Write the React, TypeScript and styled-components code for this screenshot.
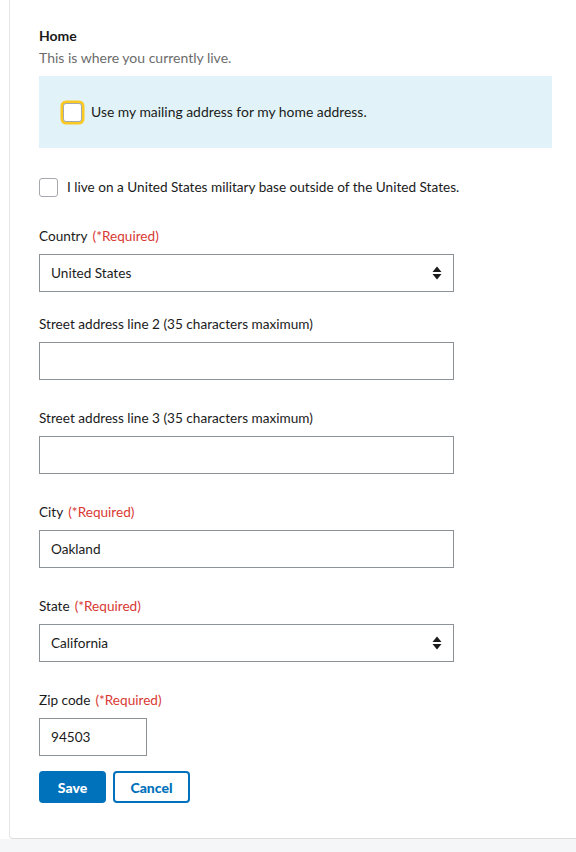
import React from "react";
import styled, { createGlobalStyle } from "styled-components";

const Global = createGlobalStyle`
  html, body { margin: 0; padding: 0; background: #ffffff; }
  body { font-family: "Lato", "Liberation Sans", sans-serif; color: #1b1b1b; }
  * { box-sizing: border-box; }
`;

const Page = styled.div`
  display: flex;
  flex-direction: column;
  width: 576px;
  min-height: 852px;
  background: #ffffff;
`;

const Card = styled.div`
  margin-left: 9px;
  border-left: 1px solid #e6e6e6;
  border-bottom: 1px solid #dcdcdc;
  border-bottom-left-radius: 4px;
  padding: 26px 0 35px 29px;
  display: flex;
  flex-direction: column;
`;

const Footer = styled.div`
  flex: 1;
  background: #f5f6f8;
`;

const Heading = styled.div`
  font-weight: 700;
  font-size: 14px;
  line-height: 20px;
`;

const Description = styled.div`
  font-size: 14px;
  line-height: 20px;
  color: #6c6c6c;
  margin-top: 2px;
`;

const Callout = styled.div`
  margin-top: 8px;
  width: 513px;
  height: 72px;
  background: #e1f3f8;
  display: flex;
  align-items: center;
  padding-left: 24px;
`;

const CheckRow = styled.label<{ $top?: number; $size?: number }>`
  display: flex;
  align-items: center;
  gap: 9px;
  font-size: ${(p) => p.$size ?? 13.6}px;
  line-height: 20px;
  margin-top: ${(p) => p.$top ?? 0}px;
`;

const Box = styled.span<{ $focus?: boolean }>`
  width: 19px;
  height: 19px;
  border: 1.5px solid #a5a9ad;
  border-radius: 3px;
  background: #fff;
  flex: none;
  ${(p) => (p.$focus ? "box-shadow: 0 0 0 2.5px #fac922;" : "")}
`;

const Field = styled.div<{ $top: number }>`
  display: flex;
  flex-direction: column;
  margin-top: ${(p) => p.$top}px;
`;

const Label = styled.div`
  font-size: 13.6px;
  line-height: 20px;
  margin-bottom: 8px;
`;

const Req = styled.span`
  color: #d83933;
  margin-left: 5px;
`;

const Control = styled.div<{ $w?: number }>`
  width: ${(p) => p.$w ?? 415}px;
  height: 38px;
  border: 1px solid #8d9297;
  background: #fff;
  display: flex;
  align-items: center;
  justify-content: space-between;
  padding: 0 11px;
  font-size: 13.6px;
`;

const Buttons = styled.div`
  display: flex;
  gap: 7px;
  margin-top: 15px;
`;

const Button = styled.button<{ $primary?: boolean; $w: number }>`
  width: ${(p) => p.$w}px;
  height: 32px;
  border-radius: 4px;
  font-family: inherit;
  font-weight: 900;
  font-size: 14px;
  cursor: pointer;
  background: ${(p) => (p.$primary ? "#0071bb" : "#fff")};
  color: ${(p) => (p.$primary ? "#fff" : "#0071bb")};
  border: ${(p) => (p.$primary ? "none" : "2px solid #0071bb")};
`;

const Arrows = () => (
  <svg width="10" height="14" viewBox="0 0 10 14">
    <path d="M5 0.5 L9.5 6 H0.5 Z" fill="#1b1b1b" />
    <path d="M5 13.5 L9.5 8 H0.5 Z" fill="#1b1b1b" />
  </svg>
);

export default function App() {
  return (
    <Page>
      <Global />
      <Card>
        <Heading>Home</Heading>
        <Description>This is where you currently live.</Description>
        <Callout>
          <CheckRow $size={13.9}>
            <Box $focus />
            Use my mailing address for my home address.
          </CheckRow>
        </Callout>
        <CheckRow $top={29}>
          <Box />
          I live on a United States military base outside of the United States.
        </CheckRow>
        <Field $top={29}>
          <Label>
            Country<Req>(*Required)</Req>
          </Label>
          <Control>
            United States
            <Arrows />
          </Control>
        </Field>
        <Field $top={22}>
          <Label>Street address line 2 (35 characters maximum)</Label>
          <Control />
        </Field>
        <Field $top={28}>
          <Label>Street address line 3 (35 characters maximum)</Label>
          <Control />
        </Field>
        <Field $top={28}>
          <Label>
            City<Req>(*Required)</Req>
          </Label>
          <Control>Oakland</Control>
        </Field>
        <Field $top={28}>
          <Label>
            State<Req>(*Required)</Req>
          </Label>
          <Control>
            California
            <Arrows />
          </Control>
        </Field>
        <Field $top={28}>
          <Label>
            Zip code<Req>(*Required)</Req>
          </Label>
          <Control $w={108}>94503</Control>
        </Field>
        <Buttons>
          <Button $primary $w={67}>Save</Button>
          <Button $w={77}>Cancel</Button>
        </Buttons>
      </Card>
      <Footer />
    </Page>
  );
}
